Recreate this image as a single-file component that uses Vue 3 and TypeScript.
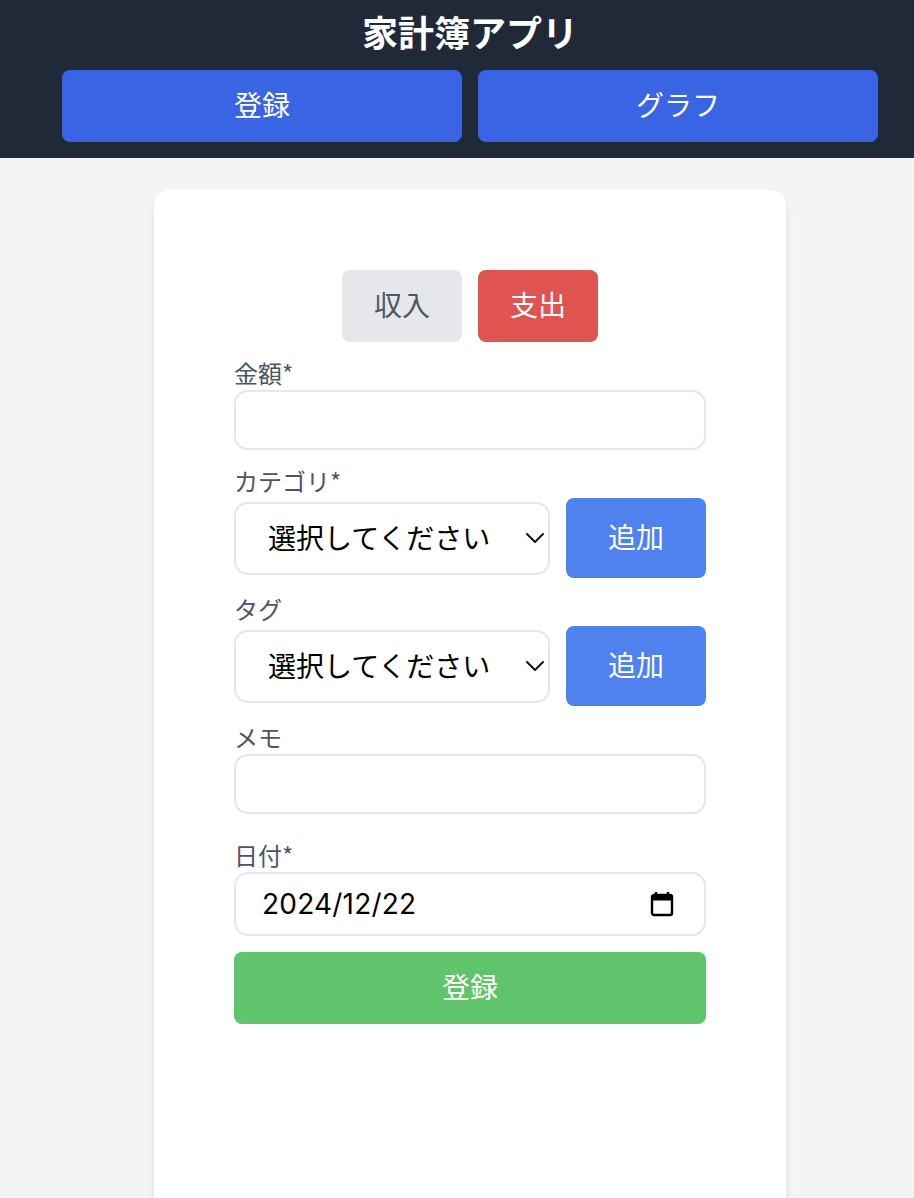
<script setup lang="ts">
import { ref } from 'vue'

const amount = ref('')
const category = ref('')
const tag = ref('')
const memo = ref('')
const date = ref('2024/12/22')
const options = ['選択してください']
</script>

<template>
  <div class="page">
    <div class="content">
      <header class="header">
        <h1 class="title">家計簿アプリ</h1>
        <nav class="nav">
          <button class="btn nav-btn">登録</button>
          <button class="btn nav-btn">グラフ</button>
        </nav>
      </header>
      <main class="main">
        <section class="card">
          <div class="types">
            <button class="btn type-btn income">収入</button>
            <button class="btn type-btn expense">支出</button>
          </div>
          <form class="form" @submit.prevent>
            <div class="field">
              <label class="label">金額*</label>
              <input v-model="amount" class="input" type="text" />
            </div>
            <div class="field">
              <label class="label">カテゴリ*</label>
              <div class="row">
                <div class="select-wrap">
                  <select v-model="category" class="select">
                    <option value="">{{ options[0] }}</option>
                  </select>
                  <svg class="chevron" width="20" height="12" viewBox="0 0 20 12" fill="none">
                    <path d="M2 2l8 8 8-8" stroke="#111" stroke-width="2" stroke-linecap="round" stroke-linejoin="round" />
                  </svg>
                </div>
                <button type="button" class="btn add-btn">追加</button>
              </div>
            </div>
            <div class="field">
              <label class="label">タグ</label>
              <div class="row">
                <div class="select-wrap">
                  <select v-model="tag" class="select">
                    <option value="">{{ options[0] }}</option>
                  </select>
                  <svg class="chevron" width="20" height="12" viewBox="0 0 20 12" fill="none">
                    <path d="M2 2l8 8 8-8" stroke="#111" stroke-width="2" stroke-linecap="round" stroke-linejoin="round" />
                  </svg>
                </div>
                <button type="button" class="btn add-btn">追加</button>
              </div>
            </div>
            <div class="field memo">
              <label class="label">メモ</label>
              <input v-model="memo" class="input" type="text" />
            </div>
            <div class="field">
              <label class="label">日付*</label>
              <div class="date-wrap">
                <input v-model="date" class="date-input" type="text" />
                <svg class="calendar" width="24" height="26" viewBox="0 0 24 26" fill="none">
                  <path d="M6 1v4M18 1v4" stroke="#000" stroke-width="2.4" />
                  <rect x="2" y="4" width="20" height="20" rx="2" stroke="#000" stroke-width="2.4" fill="#fff" />
                  <rect x="2" y="4" width="20" height="5.5" fill="#000" />
                </svg>
              </div>
            </div>
            <button type="submit" class="btn submit-btn">登録</button>
          </form>
        </section>
      </main>
    </div>
  </div>
</template>

<style>
html,
body {
  margin: 0;
  background: #f3f4f6;
}
</style>

<style scoped>
.page {
  height: 1198px;
  overflow: hidden;
  background: #f3f4f6;
  font-family: "Noto Sans CJK JP", Inter, sans-serif;
  color: #374151;
}
.content {
  width: 940px;
}
.header {
  height: 158px;
  box-sizing: border-box;
  background: #1f2937;
  padding: 3px 62px 16px;
  display: flex;
  flex-direction: column;
}
.title {
  margin: 0 0 11px;
  height: 56px;
  line-height: 56px;
  font-size: 36px;
  font-weight: 700;
  color: #fff;
  text-align: center;
}
.nav {
  display: flex;
  gap: 16px;
}
.btn {
  border: 0;
  border-radius: 8px;
  font-family: inherit;
  font-size: 28px;
  line-height: 40px;
  color: #fff;
  padding: 0 0 4px;
  cursor: pointer;
}
.nav-btn {
  flex: 1;
  height: 72px;
  background: #3964e4;
}
.main {
  display: flex;
  justify-content: center;
  padding-top: 32px;
}
.card {
  width: 632px;
  height: 1100px;
  box-sizing: border-box;
  padding: 80px;
  background: #fff;
  border-radius: 16px;
  box-shadow: 0 8px 12px -2px rgba(0, 0, 0, 0.1), 0 4px 8px -4px rgba(0, 0, 0, 0.1);
}
.types {
  display: flex;
  justify-content: center;
  gap: 16px;
}
.type-btn {
  width: 120px;
  height: 72px;
}
.income {
  background: #e5e7eb;
  color: #4b5563;
}
.expense {
  background: #df5350;
}
.form {
  margin-top: 16px;
  display: flex;
  flex-direction: column;
  gap: 16px;
}
.field {
  display: flex;
  flex-direction: column;
}
.memo {
  margin-bottom: 10px;
}
.label {
  font-size: 24px;
  line-height: 30px;
  height: 32px;
  color: #4b5563;
}
.input {
  height: 60px;
  box-sizing: border-box;
  border: 2px solid #e5e7eb;
  border-radius: 14px;
  background: #fff;
  outline: none;
  width: 100%;
  font: inherit;
}
.row {
  display: flex;
  align-items: center;
  gap: 16px;
}
.select-wrap {
  position: relative;
  flex: 1;
  min-width: 0;
}
.select {
  display: block;
  width: 100%;
  height: 73px;
  box-sizing: border-box;
  border: 2px solid #e5e7eb;
  border-radius: 14px;
  background: #fff;
  padding: 0 0 2px 32px;
  font-family: inherit;
  font-size: 28px;
  color: #000;
  appearance: none;
  outline: none;
}
.chevron {
  position: absolute;
  right: 5px;
  top: 30px;
  pointer-events: none;
}
.add-btn {
  width: 140px;
  height: 80px;
  flex: none;
  background: #4f81ef;
}
.date-wrap {
  height: 64px;
  box-sizing: border-box;
  border: 2px solid #e5e7eb;
  border-radius: 14px;
  display: flex;
  align-items: center;
  padding: 0 30px 0 26px;
  background: #fff;
}
.date-input {
  flex: 1;
  min-width: 0;
  border: 0;
  outline: none;
  padding: 0;
  background: transparent;
  font-family: Inter, sans-serif;
  font-size: 28px;
  letter-spacing: 0.2px;
  color: #000;
}
.calendar {
  flex: none;
}
.submit-btn {
  width: 100%;
  height: 72px;
  background: #5fc46c;
}
</style>
